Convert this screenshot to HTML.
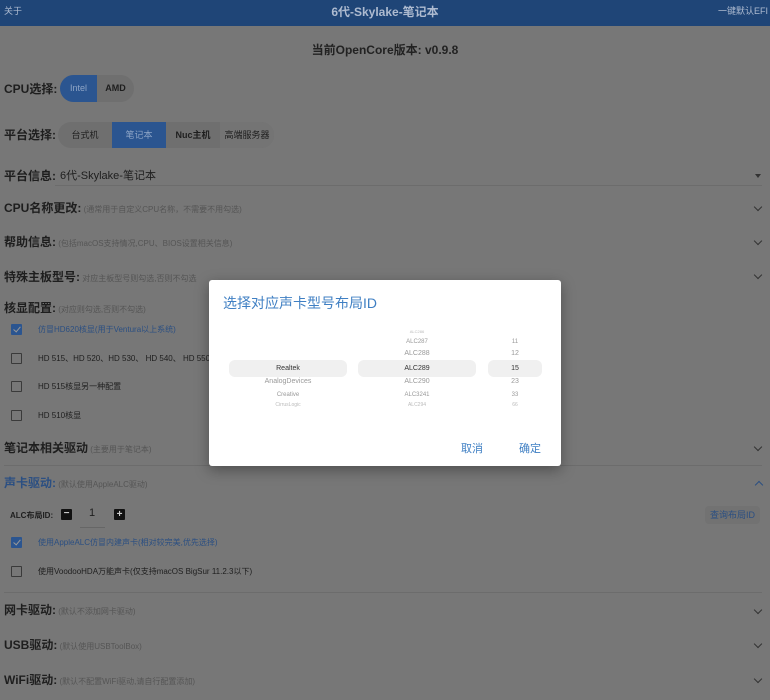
<!DOCTYPE html>
<html><head><meta charset="utf-8"><style>
*{margin:0;padding:0;box-sizing:border-box}
body{width:770px;height:700px;background:#777;position:relative;overflow:hidden;font-family:"Liberation Sans","Noto Sans CJK SC",sans-serif;color:#1e1e1e}
.a{position:absolute;white-space:nowrap}
.hd{left:0;top:0;width:770px;height:26px;background:#1f4577}
.lb{font-size:12px;font-weight:bold;line-height:14px}
.sm{font-size:8px;color:#555;font-weight:normal}
.t{font-size:8px;line-height:10px}
.blue{color:#2b4f82}
.cb{width:11px;height:11px;border:1px solid #3a3a3a;border-radius:1px}
.cbon{background:#2b5590;border-color:#2b5590}
.cbon::after{content:"";position:absolute;left:3px;top:0px;width:3px;height:6px;border-right:1.5px solid #999;border-bottom:1.5px solid #999;transform:rotate(40deg)}
.line{height:1px;background:#6c6c6c}
.chev{width:6px;height:6px;border-right:1.5px solid #333;border-bottom:1.5px solid #333;transform:rotate(45deg)}
.dlg{left:209px;top:280px;width:352px;height:186px;background:#fff;border-radius:3px;box-shadow:0 4px 14px rgba(0,0,0,.35)}
.bar{background:#f0f0f0;border-radius:6px;height:17px;top:80px}
.pk{font-size:7px;color:#999;text-align:center;line-height:8px}
</style></head><body>
<div class="a hd"></div>
<div class="a" style="left:4px;top:4px;font-size:9px;color:#aebbd0">关于</div>
<div class="a" style="left:0;width:770px;text-align:center;top:3px;font-size:12px;font-weight:bold;color:#aebbd0">6代-Skylake-笔记本</div>
<div class="a" style="right:2px;top:4px;font-size:9px;color:#aebbd0">一键默认EFI</div>

<div class="a lb" style="left:0;width:770px;text-align:center;top:43px;color:#222">当前OpenCore版本: v0.9.8</div>

<div class="a lb" style="left:4px;top:82px">CPU选择:</div>
<div class="a" style="left:60px;top:75px;width:74px;height:27px;border-radius:14px;background:#6f6f6f;overflow:hidden">
 <div class="a" style="left:0;top:0;width:37px;height:27px;background:#2b5590;color:#8ea5c6;font-size:9px;line-height:27px;text-align:center">Intel</div>
 <div class="a" style="left:37px;top:0;width:37px;height:27px;font-size:9px;font-weight:bold;line-height:27px;text-align:center">AMD</div>
</div>

<div class="a lb" style="left:4px;top:128px">平台选择:</div>
<div class="a" style="left:58px;top:122px;width:216px;height:26px;border-radius:13px;background:#6f6f6f;overflow:hidden;font-size:9px;line-height:26px">
 <div class="a" style="left:0;width:54px;text-align:center">台式机</div>
 <div class="a" style="left:54px;width:54px;height:26px;background:#2b5590;color:#8ea5c6;text-align:center">笔记本</div>
 <div class="a" style="left:108px;width:54px;text-align:center;font-weight:bold">Nuc主机</div>
 <div class="a" style="left:162px;width:54px;text-align:center;background:#747474">高端服务器</div>
</div>

<div class="a lb" style="left:4px;top:169px">平台信息:</div>
<div class="a" style="left:60px;top:169px;font-size:11px;line-height:14px">6代-Skylake-笔记本</div>
<div class="a line" style="left:55px;top:185px;width:707px"></div>
<div class="a" style="left:755px;top:174px;width:0;height:0;border-left:3px solid transparent;border-right:3px solid transparent;border-top:4px solid #333"></div>

<div class="a lb" style="left:4px;top:201px">CPU名称更改:<span class="sm"> (通常用于自定义CPU名称，不需要不用勾选)</span></div>
<div class="a chev" style="left:755px;top:204px"></div>
<div class="a lb" style="left:4px;top:235px">帮助信息:<span class="sm"> (包括macOS支持情况,CPU、BIOS设置相关信息)</span></div>
<div class="a chev" style="left:755px;top:238px"></div>
<div class="a lb" style="left:4px;top:270px">特殊主板型号:<span class="sm"> 对应主板型号则勾选,否则不勾选</span></div>
<div class="a chev" style="left:755px;top:272px"></div>
<div class="a lb" style="left:4px;top:301px">核显配置:<span class="sm"> (对应则勾选,否则不勾选)</span></div>

<div class="a cb cbon" style="left:11px;top:324px"></div>
<div class="a t blue" style="left:38px;top:325px">仿冒HD620核显(用于Ventura以上系统)</div>
<div class="a cb" style="left:11px;top:353px"></div>
<div class="a t" style="left:38px;top:354px">HD 515、HD 520、HD 530、 HD 540、 HD 550</div>
<div class="a cb" style="left:11px;top:381px"></div>
<div class="a t" style="left:38px;top:382px">HD 515核显另一种配置</div>
<div class="a cb" style="left:11px;top:410px"></div>
<div class="a t" style="left:38px;top:411px">HD 510核显</div>

<div class="a lb" style="left:4px;top:441px">笔记本相关驱动<span class="sm"> (主要用于笔记本)</span></div>
<div class="a chev" style="left:755px;top:444px"></div>
<div class="a line" style="left:4px;top:465px;width:758px"></div>
<div class="a lb blue" style="left:4px;top:476px">声卡驱动:<span class="sm"> (默认使用AppleALC驱动)</span></div>
<div class="a" style="left:756px;top:482px;width:6px;height:6px;border-left:1.5px solid #2b4f82;border-top:1.5px solid #2b4f82;transform:rotate(45deg)"></div>

<div class="a" style="left:10px;top:510px;font-size:8px;font-weight:bold">ALC布局ID:</div>
<div class="a" style="left:61px;top:509px;width:11px;height:11px;background:#111;border-radius:1px;color:#ccc;font-size:10px;line-height:10px;text-align:center;font-weight:bold">−</div>
<div class="a" style="left:89px;top:507px;font-size:11px">1</div>
<div class="a line" style="left:80px;top:527px;width:25px;background:#666"></div>
<div class="a" style="left:114px;top:509px;width:11px;height:11px;background:#111;border-radius:1px;color:#ccc;font-size:10px;line-height:11px;text-align:center;font-weight:bold">+</div>
<div class="a" style="left:705px;top:506px;width:55px;height:18px;border-radius:4px;background:#727272;color:#2b4f82;font-size:9px;line-height:18px;text-align:center">查询布局ID</div>

<div class="a cb cbon" style="left:11px;top:537px"></div>
<div class="a t blue" style="left:38px;top:538px">使用AppleALC仿冒内建声卡(相对较完美,优先选择)</div>
<div class="a cb" style="left:11px;top:566px"></div>
<div class="a t" style="left:38px;top:567px">使用VoodooHDA万能声卡(仅支持macOS BigSur 11.2.3以下)</div>
<div class="a line" style="left:4px;top:592px;width:758px"></div>

<div class="a lb" style="left:4px;top:603px">网卡驱动:<span class="sm"> (默认不添加网卡驱动)</span></div>
<div class="a chev" style="left:755px;top:607px"></div>
<div class="a lb" style="left:4px;top:638px">USB驱动:<span class="sm"> (默认使用USBToolBox)</span></div>
<div class="a chev" style="left:755px;top:641px"></div>
<div class="a lb" style="left:4px;top:673px">WiFi驱动:<span class="sm"> (默认不配置WiFi驱动,请自行配置添加)</span></div>
<div class="a chev" style="left:755px;top:676px"></div>

<div class="a dlg">
 <div class="a" style="left:14px;top:14px;font-size:14px;color:#3f7fc3;line-height:18px">选择对应声卡型号布局ID</div>
 <div class="a bar" style="left:20px;width:118px"></div>
 <div class="a bar" style="left:149px;width:118px"></div>
 <div class="a bar" style="left:279px;width:54px"></div>
 <div class="a pk" style="left:20px;width:118px;top:85px;color:#333">Realtek</div>
 <div class="a pk" style="left:20px;width:118px;top:98px">AnalogDevices</div>
 <div class="a pk" style="left:20px;width:118px;top:111px;font-size:6px">Creative</div>
 <div class="a pk" style="left:20px;width:118px;top:121px;font-size:5px;color:#bbb">CirrusLogic</div>
 <div class="a pk" style="left:149px;width:118px;top:48px;font-size:4px;color:#bbb">ALC286</div>
 <div class="a pk" style="left:149px;width:118px;top:58px;font-size:6px">ALC287</div>
 <div class="a pk" style="left:149px;width:118px;top:70px">ALC288</div>
 <div class="a pk" style="left:149px;width:118px;top:85px;color:#333">ALC289</div>
 <div class="a pk" style="left:149px;width:118px;top:98px">ALC290</div>
 <div class="a pk" style="left:149px;width:118px;top:111px;font-size:6px">ALC3241</div>
 <div class="a pk" style="left:149px;width:118px;top:121px;font-size:5px;color:#bbb">ALC294</div>
 <div class="a pk" style="left:279px;width:54px;top:58px;font-size:6px">11</div>
 <div class="a pk" style="left:279px;width:54px;top:70px">12</div>
 <div class="a pk" style="left:279px;width:54px;top:85px;color:#333">15</div>
 <div class="a pk" style="left:279px;width:54px;top:98px">23</div>
 <div class="a pk" style="left:279px;width:54px;top:111px;font-size:6px">33</div>
 <div class="a pk" style="left:279px;width:54px;top:121px;font-size:5px;color:#bbb">66</div>
 <div class="a" style="left:252px;top:160px;font-size:11px;color:#3f7fc3">取消</div>
 <div class="a" style="left:310px;top:160px;font-size:11px;color:#3f7fc3">确定</div>
</div>
</body></html>
